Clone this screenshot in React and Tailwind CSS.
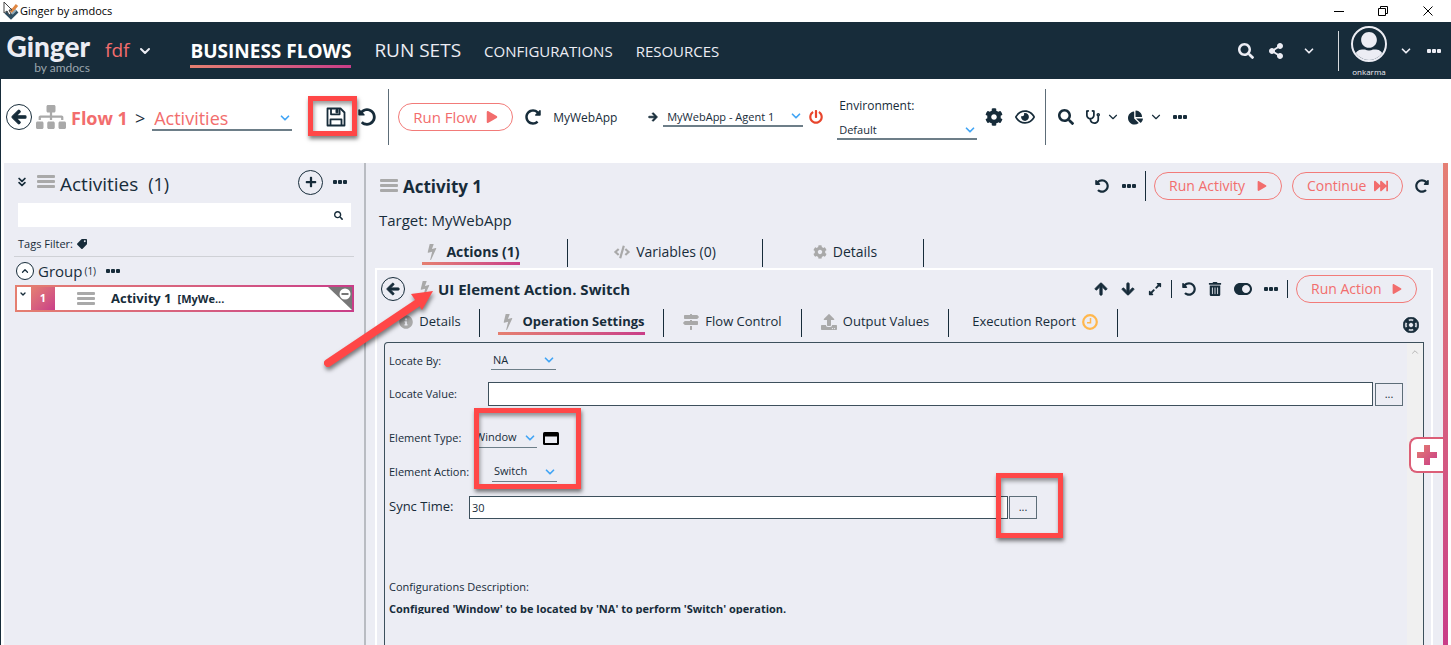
import React from "react";
import {
  FaArrowLeft, FaArrowRight, FaArrowUp, FaArrowDown, FaSitemap, FaUndoAlt, FaRedoAlt, FaPlay,
  FaPowerOff, FaCog, FaRegEye, FaSearch, FaStethoscope, FaChartPie, FaShareAlt,
  FaPlus, FaTag, FaCode, FaInfoCircle, FaMapSigns, FaUpload, FaRegLifeRing,
  FaExpandAlt, FaTrashAlt, FaToggleOn, FaFastForward, FaUserAlt,
} from "react-icons/fa";
import { ChevronDown, ChevronUp, ChevronsDown } from "lucide-react";

function IconButton({ label, className = "", children }) {
  return (
    <button type="button" aria-label={label} className={"flex shrink-0 items-center justify-center " + className}>
      {children}
    </button>
  );
}

function Dots({ className = "" }) {
  return (
    <svg viewBox="0 0 14 4" className={"h-1 w-3.5 " + className} fill="currentColor" aria-hidden="true">
      <rect x="0" y="0" width="4" height="4" rx="1" />
      <rect x="5" y="0" width="4" height="4" rx="1" />
      <rect x="10" y="0" width="4" height="4" rx="1" />
    </svg>
  );
}

function Bars() {
  return (
    <svg viewBox="0 0 18 14" className="h-3.5 w-[18px] shrink-0 text-[#a9a9a9]" fill="currentColor" aria-hidden="true">
      <rect width="18" height="3" rx="1" />
      <rect y="5" width="18" height="3" rx="1" />
      <rect y="10" width="18" height="3" rx="1" />
    </svg>
  );
}

function BoltIcon({ className = "" }) {
  return (
    <svg viewBox="0 535 896 1662" className={"h-4 w-3 shrink-0 " + className} fill="currentColor" aria-hidden="true">
      <path d="M885 970q18 20 7 44l-540 1157q-13 25-42 25-4 0-14-2-17-5-25.500-19t-4.500-30l197-808-406 101q-4 1-12 1-18 0-31-11-18-15-13-39l201-825q4-14 16-23t28-9h328q19 0 32 12.500t13 29.500q0 8-5 18l-171 463 396-98q8-2 12-2 19 0 34 15z" />
    </svg>
  );
}

function ClockIcon() {
  return (
    <svg viewBox="0 0 16 16" className="size-4 text-[#ffb74d]" fill="none" stroke="currentColor" aria-hidden="true">
      <circle cx="8" cy="8" r="6.800" strokeWidth="2.200" />
      <path d="M8.500 4v4.700H5" strokeWidth="1.500" />
    </svg>
  );
}

function SaveIcon() {
  return (
    <svg viewBox="0 0 20 20" className="size-5" fill="none" stroke="currentColor" strokeWidth="1.8" strokeLinejoin="round" aria-hidden="true">
      <path d="M1.5 1.5h13l4 4v13h-17z" />
      <path d="M5 1.5v5.8h8.6V1.5" />
      <path d="M10 2.5h2v3.3h-2z" fill="currentColor" strokeWidth="1" />
      <path d="M4.5 18.500v-6.200h11v6.200" />
    </svg>
  );
}

function WindowIcon() {
  return (
    <svg viewBox="0 0 16 13" className="h-[13px] w-4" aria-hidden="true">
      <rect width="16" height="13" rx="1.500" fill="#000" />
      <rect x="2" y="4.500" width="12" height="6.500" fill="#ecedf4" />
    </svg>
  );
}

function AppLogo() {
  return (
    <svg viewBox="0 0 17 18" className="h-[18px] w-[17px]" aria-hidden="true">
      <path d="M4 10l5 5 6-6" fill="none" stroke="#2f4f63" strokeWidth="4" />
      <path d="M8 7l2 2 5-6" fill="none" stroke="#e08743" strokeWidth="3" />
      <path d="M10 12l4-4" stroke="#8fa9b8" strokeWidth="2" />
      <path d="M2 0v11l3-2 2 4 2-1-2-4h3z" fill="#fff" stroke="#444" strokeWidth="1" />
    </svg>
  );
}

function Dropdown({ label, value, id, className = "", textClass = "text-xs" }) {
  return (
    <span className={"relative flex shrink-0 items-center border-[#6d7e88] " + className}>
      <select id={id} aria-label={label} defaultValue={value} className={"w-full appearance-none bg-transparent outline-none " + textClass}>
        <option>{value}</option>
      </select>
      <ChevronDown className="pointer-events-none absolute right-0 size-3.5 text-[#42a5f5]" strokeWidth={3} />
    </span>
  );
}

function Pill({ className = "", icon, children }) {
  return (
    <button
      type="button"
      className={"flex h-7 shrink-0 items-center justify-between rounded-full border border-[#f27b79] px-3.5 text-[#f26d6d] " + className}
    >
      <span>{children}</span>
      {icon}
    </button>
  );
}

function Highlight({ className = "" }) {
  return (
    <span
      aria-hidden="true"
      className={"pointer-events-none absolute border-[5px] border-[#ff4747] shadow-[1px_3px_4px_rgba(0,0,0,0.5),inset_1px_3px_4px_rgba(0,0,0,0.4)] " + className}
    />
  );
}

function TitleBar() {
  return (
    <div className="flex h-[22px] items-center bg-white pl-0.5 text-black">
      <AppLogo />
      <span className="ml-px text-[11px]">Ginger by amdocs</span>
      <div className="ml-auto flex items-center">
        <IconButton label="Minimize" className="w-11">
          <span className="h-px w-2.5 bg-black" />
        </IconButton>
        <IconButton label="Restore" className="w-11">
          <svg viewBox="0 0 10 10" className="size-2.5" fill="none" stroke="#000" aria-hidden="true">
            <path d="M.5 2.500h7v7h-7z" />
            <path d="M2.500 2.500v-2h7v7h-2" />
          </svg>
        </IconButton>
        <IconButton label="Close" className="w-[46px]">
          <svg viewBox="0 0 10 10" className="size-2.5" stroke="#000" aria-hidden="true">
            <path d="M.5.5l9 9M9.500.5l-9 9" />
          </svg>
        </IconButton>
      </div>
    </div>
  );
}

function Header() {
  return (
    <header className="flex h-[57px] items-center bg-[#172c3a] pr-2.5 text-[#ecedf4]">
      <div className="flex w-[90px] flex-col items-end pt-0.5" style={{ fontFamily: "Lato, sans-serif" }}>
        <span className="text-[28px] leading-8 font-black">Ginger</span>
        <span className="text-xs leading-3 text-[#9aa5ad]">by amdocs</span>
      </div>
      <button type="button" className="ml-[15px] flex items-center gap-2 text-[19px] text-[#f26d6d]">
        fdf
        <ChevronDown className="size-4 text-[#ecedf4]" strokeWidth={3} />
      </button>
      <nav className="ml-[37px] flex items-center gap-[23px]">
        <a href="#flows" className="flex flex-col gap-0.5 pt-1.5 text-[19px] leading-6 font-bold text-white">
          BUSINESS FLOWS
          <span className="h-[3px] bg-linear-to-r from-[#e57f70] to-[#c93d88]" />
        </a>
        <a href="#runsets" className="text-[19px]">RUN SETS</a>
        <a href="#configurations" className="pt-0.5 text-[15px]">CONFIGURATIONS</a>
        <a href="#resources" className="pt-0.5 text-[15px]">RESOURCES</a>
      </nav>
      <div className="ml-auto flex items-center">
        <IconButton label="Search"><FaSearch className="size-4" /></IconButton>
        <IconButton label="Share" className="ml-3.5"><FaShareAlt className="size-4" /></IconButton>
        <IconButton label="Share options" className="ml-[18px]"><ChevronDown className="size-3.5" strokeWidth={3} /></IconButton>
        <span className="ml-[22px] h-10 w-px bg-[#d5d9dd]" />
        <div className="ml-3 flex flex-col items-center">
          <span className="flex size-9 items-end justify-center overflow-hidden rounded-full border-2 border-[#ecedf4]">
            <FaUserAlt className="size-7" />
          </span>
          <span className="mt-1.5 text-[8px] leading-2">onkarma</span>
        </div>
        <IconButton label="User options" className="ml-3"><ChevronDown className="size-3.5" strokeWidth={3} /></IconButton>
        <IconButton label="More" className="ml-3.5"><Dots /></IconButton>
      </div>
    </header>
  );
}

function Toolbar() {
  return (
    <div className="flex h-[84px] items-center border-l border-[#172c3a] bg-white pb-2 pl-[5px]">
      <IconButton label="Back" className="size-[26px] rounded-full border border-[#172c3a]">
        <FaArrowLeft className="size-4" strokeWidth={36} />
      </IconButton>
      <FaSitemap className="ml-1 size-[30px] shrink-0 text-[#a9a9a9]" />
      <span className="ml-[5px] shrink-0 pt-0.5 text-lg font-bold text-[#f26d6d]">Flow 1</span>
      <span className="ml-[7px] pt-0.5 text-lg">&gt;</span>
      <Dropdown label="View" value="Activities" className="ml-[7px] h-7 w-[140px] border-b-2 pt-1" textClass="pl-0.5 text-lg leading-6 text-[#f26d6d]" />
      <span className="relative ml-[34px] flex">
        <IconButton label="Save"><SaveIcon /></IconButton>
        <Highlight className="-top-[11px] -left-[18px] h-10 w-[49px]" />
      </span>
      <IconButton label="Undo" className="ml-3"><FaUndoAlt className="size-[18px]" /></IconButton>
      <span className="ml-3 h-14 w-px shrink-0 bg-[#5d6d78]" />
      <Pill className="ml-[9px] w-[115px] text-[15px]" icon={<FaPlay className="size-3" />}>Run Flow</Pill>
      <IconButton label="Refresh" className="ml-3"><FaRedoAlt className="size-4" /></IconButton>
      <span className="ml-3 w-[95px] shrink-0 pt-0.5 text-xs">MyWebApp</span>
      <FaArrowRight className="size-2.5 shrink-0" strokeWidth={36} />
      <Dropdown label="Agent" value="MyWebApp - Agent 1" className="ml-[5px] h-5 w-[140px] border-b-2" textClass="pl-1 pt-0.5 text-[11px]" />
      <IconButton label="Stop agent" className="ml-1.5 text-[#e8452c]"><FaPowerOff className="size-3.5" /></IconButton>
      <div className="ml-3.5 flex flex-col gap-1.5 pt-0.5">
        <label htmlFor="environment" className="pl-0.5 text-xs leading-5">Environment:</label>
        <Dropdown id="environment" label="Environment" value="Default" className="h-[18px] w-[140px] border-b-2" textClass="pl-0.5 text-[11px] leading-4" />
      </div>
      <IconButton label="Settings" className="ml-2"><FaCog className="size-[18px]" /></IconButton>
      <IconButton label="View options" className="ml-3"><FaRegEye className="size-5" /></IconButton>
      <span className="ml-2.5 h-14 w-px shrink-0 bg-[#5d6d78]" />
      <IconButton label="Find" className="ml-3"><FaSearch className="size-4" /></IconButton>
      <IconButton label="Analyze" className="ml-3 gap-1.5">
        <FaStethoscope className="size-3.5" /><ChevronDown className="size-3.5" strokeWidth={2} />
      </IconButton>
      <IconButton label="Reports" className="ml-2 gap-1.5">
        <FaChartPie className="size-[15px]" /><ChevronDown className="size-3.5" strokeWidth={2} />
      </IconButton>
      <IconButton label="More" className="ml-2.5"><Dots /></IconButton>
    </div>
  );
}

function Sidebar() {
  return (
    <aside className="flex w-[362px] shrink-0 flex-col border-r-2 border-[#b9bcc2] pt-[5px] pr-2.5 pl-2.5">
      <div className="flex h-7 items-center pr-[7px] pl-px">
        <IconButton label="Collapse all"><ChevronsDown className="size-3.5" strokeWidth={3} /></IconButton>
        <span className="ml-2"><Bars /></span>
        <h2 className="ml-[5px] pt-1 text-[19px]">Activities</h2>
        <span className="ml-2.5 pt-1 text-lg">(1)</span>
        <IconButton label="Add activity" className="ml-auto size-[25px] rounded-full border border-[#172c3a]">
          <FaPlus className="size-3" />
        </IconButton>
        <IconButton label="More" className="ml-2.5"><Dots /></IconButton>
      </div>
      <div className="mt-[7px] mr-[3px] ml-1 flex h-6 items-center bg-white pr-2">
        <input type="text" aria-label="Search activities" className="h-full min-w-0 flex-1 bg-transparent px-2 text-xs outline-none" />
        <FaSearch className="size-[9px]" />
      </div>
      <div className="mt-2 ml-1 flex h-[18px] items-center gap-1 text-[11px]">
        Tags Filter:<FaTag className="size-2.5 -scale-x-100" />
      </div>
      <hr className="mt-[3px] border-[#cfd1d6]" />
      <div className="flex h-7 items-center pl-0.5">
        <IconButton label="Toggle group" className="size-[18px] rounded-full border border-[#172c3a] bg-white">
          <ChevronUp className="size-2.5" strokeWidth={3} />
        </IconButton>
        <span className="ml-1 text-[15px]">Group</span>
        <span className="ml-0.5 text-[10px]">(1)</span>
        <IconButton label="Group options" className="ml-2.5"><Dots /></IconButton>
      </div>
      <div className="ml-px bg-linear-to-r from-[#e57f70] to-[#c93d88] p-0.5">
        <div className="relative flex h-[23px] items-center bg-white">
          <ChevronDown className="mb-2.5 ml-0.5 size-2" strokeWidth={4} />
          <span className="ml-1 flex h-full w-6 items-center justify-center bg-linear-to-br from-[#e57f70] to-[#c93d88] text-[11px] font-bold text-white">1</span>
          <span className="ml-[22px]"><Bars /></span>
          <span className="ml-4 text-[13px] font-bold">Activity 1</span>
          <span className="ml-1.5 pt-0.5 text-[11px] font-bold">[MyWe...</span>
          <svg viewBox="0 0 24 23" className="absolute top-0 right-0 h-[23px] w-6" aria-hidden="true">
            <path d="M0 0h24v23z" fill="#777" />
            <circle cx="17" cy="7" r="5.500" fill="#fff" />
            <path d="M13.500 7h7" stroke="#777" strokeWidth="2" />
          </svg>
        </div>
      </div>
    </aside>
  );
}

function Separator({ className = "h-7" }) {
  return <span className={"w-px shrink-0 bg-[#172c3a] " + className} />;
}

function Tab({ icon, trailing, active = false, className = "", children }) {
  return (
    <a href="#tab" className={"flex shrink-0 flex-col items-center pt-[3px] " + className}>
      <span className="flex flex-col">
        <span className={"flex h-5 items-center " + (active ? "gap-2 pl-1 font-bold" : "gap-1.5")}>
          {icon && <span className="text-[#a9a9a9]">{icon}</span>}
          {children}
          {trailing}
        </span>
        <span className={active ? "h-[3px] bg-linear-to-r from-[#e57f70] to-[#c93d88]" : "h-[3px]"} />
      </span>
    </a>
  );
}

function MoreButton({ label }) {
  return (
    <button type="button" aria-label={label} className="flex h-[23px] w-7 shrink-0 items-center justify-center border border-[#5d6d78] text-[11px]">
      ...
    </button>
  );
}

function OperationSettings() {
  return (
    <div className="mr-[7px] ml-[7px] flex flex-1 rounded-tl border border-b-0 border-[#3d505c] text-[11px]">
      <form className="flex min-w-0 flex-1 flex-col pl-1">
        <div className="mt-[7px] flex h-5 items-center">
          <label htmlFor="locate-by" className="w-[102px] pt-0.5">Locate By:</label>
          <Dropdown id="locate-by" label="Locate By" value="NA" className="h-5 w-[65px] border-b" textClass="pl-0.5 pt-0.5 text-[11px]" />
        </div>
        <div className="mt-3 flex h-6 items-center">
          <label htmlFor="locate-value" className="w-[99px]">Locate Value:</label>
          <input id="locate-value" type="text" className="h-6 min-w-0 flex-1 border border-[#3d505c] bg-white px-1 outline-none" />
          <span className="mr-1 ml-0.5 flex"><MoreButton label="Edit locate value" /></span>
        </div>
        <div className="relative mt-[22px] flex w-[170px] flex-col gap-3.5">
          <div className="flex h-5 items-center">
            <label htmlFor="element-type" className="w-[88px]">Element Type:</label>
            <Dropdown id="element-type" label="Element Type" value="Window" className="h-5 w-[62px] border-b" textClass="text-[11px]" />
            <span className="ml-1.5"><WindowIcon /></span>
          </div>
          <div className="flex h-5 items-center">
            <label htmlFor="element-action" className="w-[103px]">Element Action:</label>
            <Dropdown id="element-action" label="Element Action" value="Switch" className="h-5 w-[65px] border-b" textClass="pl-0.5 text-[11px]" />
          </div>
          <Highlight className="-top-5 left-[85px] h-[81px] w-[107px]" />
        </div>
        <div className="mt-[13px] flex h-6 items-center">
          <label htmlFor="sync-time" className="w-20 text-[13px]">Sync Time:</label>
          <input id="sync-time" type="text" defaultValue="30" className="h-[23px] w-[539px] border border-[#3d505c] bg-white px-0.5 outline-none" />
          <span className="relative ml-px flex">
            <MoreButton label="Edit sync time" />
            <Highlight className="-top-[23px] -left-[13px] h-[65px] w-[67px]" />
          </span>
        </div>
        <p className="mt-[58px] leading-5">Configurations Description:</p>
        <p className="mt-1 h-[13px] overflow-hidden leading-4 font-bold">
          Configured 'Window' to be located by 'NA' to perform 'Switch' operation.
        </p>
      </form>
      <div className="flex w-4 shrink-0 justify-center bg-[#f0f0f0] pt-1 text-[#a9a9a9]">
        <ChevronUp className="size-2.5" />
      </div>
    </div>
  );
}

function ActionCard() {
  return (
    <section className="mr-2.5 flex flex-1 flex-col border-2 border-b-0 border-white">
      <div className="flex h-[37px] items-center pr-[14px] pl-1">
        <IconButton label="Back to actions" className="size-6 rounded-full border border-[#172c3a]">
          <FaArrowLeft className="size-3.5" strokeWidth={36} />
        </IconButton>
        <BoltIcon className="ml-3.5 text-[#a9a9a9]" />
        <h3 className="ml-[7px] pt-0.5 text-[15px] font-bold">UI Element Action. Switch</h3>
        <div className="ml-auto flex items-center">
          <IconButton label="Move up"><FaArrowUp className="size-3.5" strokeWidth={36} /></IconButton>
          <IconButton label="Move down" className="ml-[13px]"><FaArrowDown className="size-3.5" strokeWidth={36} /></IconButton>
          <IconButton label="Expand" className="ml-[13px]"><FaExpandAlt className="size-3.5" /></IconButton>
          <Separator className="ml-[9px] h-[18px]" />
          <IconButton label="Undo action" className="ml-2.5"><FaUndoAlt className="size-3.5" /></IconButton>
          <IconButton label="Delete action" className="ml-3"><FaTrashAlt className="size-3.5" /></IconButton>
          <IconButton label="Enable action" className="ml-3"><FaToggleOn className="size-[18px]" /></IconButton>
          <IconButton label="More" className="ml-3"><Dots /></IconButton>
          <Separator className="ml-[9px] h-[18px]" />
          <Pill className="ml-2 w-[121px] text-sm" icon={<FaPlay className="size-2.5" />}>Run Action</Pill>
        </div>
      </div>
      <div className="flex h-[35px] items-start pt-0.5 pr-3 text-[13px]">
        <Tab className="w-[102px] pl-1" icon={<FaInfoCircle className="size-3.5" />}>Details</Tab>
        <Separator />
        <Tab className="w-[183px]" active icon={<BoltIcon />}>Operation Settings</Tab>
        <Separator />
        <Tab className="w-[137px]" icon={<FaMapSigns className="size-4" />}>Flow Control</Tab>
        <Separator />
        <Tab className="w-[146px]" icon={<FaUpload className="size-4" />}>Output Values</Tab>
        <Separator />
        <Tab className="w-[168px] pl-1" trailing={<ClockIcon />}>Execution Report</Tab>
        <Separator />
        <IconButton label="Help" className="mt-2 ml-auto"><FaRegLifeRing className="size-4" strokeWidth={24} /></IconButton>
      </div>
      <OperationSettings />
    </section>
  );
}

function ActivityPanel() {
  return (
    <main className="relative flex min-w-0 flex-1 flex-col pt-2 pl-[9px]">
      <div className="flex h-[30px] items-center pr-[14px] pl-[5px]">
        <Bars />
        <h2 className="ml-[5px] pt-0.5 text-[17px] font-bold">Activity 1</h2>
        <div className="ml-auto flex items-center">
          <IconButton label="Undo activity"><FaUndoAlt className="size-3.5" /></IconButton>
          <IconButton label="More" className="ml-[13px]"><Dots /></IconButton>
          <Separator className="ml-[9px] h-[30px]" />
          <Pill className="ml-2 w-32 text-sm" icon={<FaPlay className="size-2.5" />}>Run Activity</Pill>
          <Pill className="ml-2.5 w-[111px] text-sm" icon={<FaFastForward className="size-3.5" />}>Continue</Pill>
          <IconButton label="Reset" className="ml-3"><FaRedoAlt className="size-3.5" /></IconButton>
        </div>
      </div>
      <p className="mt-[7px] pl-1 text-[15px] leading-6">Target: MyWebApp</p>
      <div className="mt-[7px] flex h-[29px] text-sm">
        <Tab className="w-48" active icon={<BoltIcon />}>Actions (1)</Tab>
        <Separator />
        <Tab className="w-[194px]" icon={<FaCode className="size-4" />}>Variables (0)</Tab>
        <Separator />
        <Tab className="w-40 pl-1" icon={<FaCog className="size-3.5" />}>Details</Tab>
        <Separator />
      </div>
      <ActionCard />
      <svg viewBox="0 0 120 90" className="pointer-events-none absolute top-[120px] -left-[46px] h-[90px] w-[120px] drop-shadow-[1px_3px_2px_rgba(0,0,0,0.5)]" aria-hidden="true">
        <path d="M8 80L96 21" stroke="#ff4747" strokeWidth="8" strokeLinecap="round" />
        <path d="M113 8L91 11l11 16z" fill="#ff4747" />
      </svg>
      <button
        type="button"
        aria-label="Add"
        className="absolute top-[274px] right-0 flex h-9 w-[34px] items-center justify-center rounded-l-lg border-2 border-r-0 border-[#dc5f78] bg-white"
      >
        <svg viewBox="0 0 20 20" className="size-5" aria-hidden="true">
          <defs>
            <linearGradient id="plus-fill" x1="0" y1="0" x2="1" y2="1">
              <stop offset="0" stopColor="#e57f70" />
              <stop offset="1" stopColor="#c93d88" />
            </linearGradient>
          </defs>
          <path d="M7 0h6v7h7v6h-7v7H7v-7H0V7h7z" fill="url(#plus-fill)" />
        </svg>
      </button>
    </main>
  );
}

export default function App() {
  return (
    <div className="flex min-h-screen flex-col bg-white text-[#172c3a]" style={{ fontFamily: "'Open Sans', 'Noto Sans', sans-serif" }}>
      <TitleBar />
      <Header />
      <Toolbar />
      <div className="flex flex-1 border-l border-[#172c3a] pr-[3px] pl-[3px]">
        <div className="flex min-w-0 flex-1 bg-[#ecedf4]">
          <Sidebar />
          <ActivityPanel />
        </div>
        <div className="w-[5px] shrink-0 bg-linear-to-b from-[#e57f74] to-[#c93d88]" />
      </div>
    </div>
  );
}
